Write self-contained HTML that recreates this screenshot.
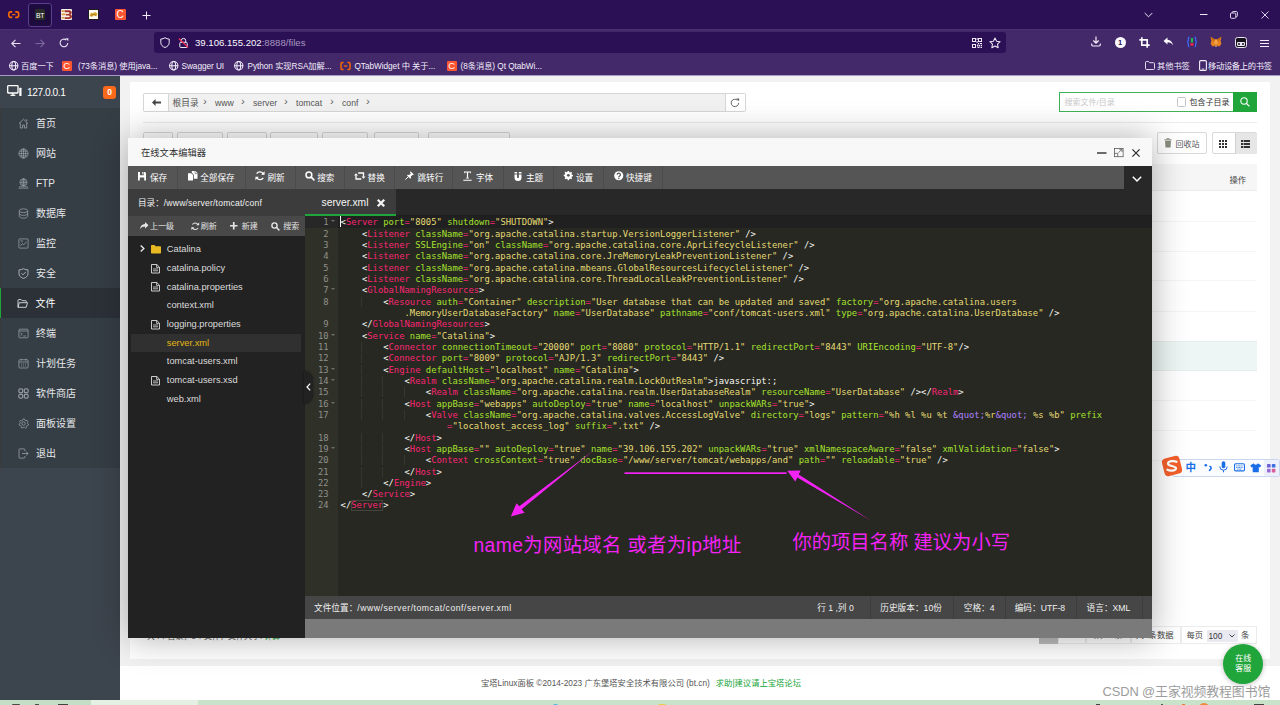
<!DOCTYPE html>
<html lang="zh-CN">
<head>
<meta charset="utf-8">
<title>宝塔Linux面板</title>
<style>
*{box-sizing:border-box;margin:0;padding:0}
html,body{width:1280px;height:705px;overflow:hidden;background:#f2f2f2}
body{position:relative;font-family:"Liberation Sans","Noto Sans CJK SC",sans-serif;font-size:8px;color:#333;-webkit-font-smoothing:antialiased}
.abs{position:absolute}
svg{position:absolute;overflow:visible}
/* ---------- browser chrome ---------- */
#tabbar{left:0;top:0;width:1280px;height:29px;background:#2c1055}
#navbar{left:0;top:29px;width:1280px;height:46px;background:#43296a;border-top:1px solid #4a3170}
#pageline{left:0;top:75px;width:1280px;height:1px;background:#a99bc4}
#urlbar{left:154px;top:32px;width:852px;height:21px;background:#2c1055;border-radius:3px}
.bm{position:absolute;top:59.500px;height:13px;line-height:13px;font-size:8.250px;color:#f3eefa;white-space:nowrap;letter-spacing:-0.05px}
/* ---------- sidebar ---------- */
#side{left:0;top:76px;width:120px;height:623.500px;background:#3c444d}
#sidehead{left:0;top:0;width:120px;height:32px;background:#3c444d}
#menu{left:0;top:32px;width:120px;height:360px;background:#353d45;border-left:1px solid #3a3a38}
.mi{position:absolute;left:-1px;width:120px;height:30px;line-height:31.500px;font-size:10px;color:#e6e8ea;padding-left:36px;white-space:nowrap}
.mi svg{left:17.5px;top:9.5px;width:11px;height:11px}
.mi.on{background:#2c3138;border-left:1.500px solid #20a53a;padding-left:34.500px;color:#fff}
.mi.on svg{left:16px}
/* ---------- main ---------- */
#panel{left:130px;top:82px;width:1140px;height:577px;background:#fff}
#footer{left:120px;top:666px;width:1160px;height:33.500px;background:#fff}
#taskbar{left:0;top:699.500px;width:1280px;height:6px;background:#c9e3cb;overflow:hidden}
.bc{top:13.500px;height:14px;line-height:14px;font-size:8.700px;color:#555;white-space:nowrap}
.bcs{top:12.300px;height:14px;line-height:14px;font-size:11.500px;color:#666;white-space:nowrap}
.tb{top:50px;height:20px;background:#fff;border:1px solid #d9d9d9;border-radius:2px}
.rl{left:13px;width:1114px;height:1px;background:#f5f5f5}
.pg{top:544px;height:18px;line-height:17px;border:1px solid #ececec;background:#fff;font-size:8.300px;color:#444;text-align:center;white-space:nowrap}
/* ---------- modal ---------- */
#modal{left:128px;top:138px;width:1024px;height:499.500px;background:#7a7a7a;overflow:hidden;box-shadow:0 0 33px rgba(0,0,0,.32)}
#mtool{left:0;top:28px;width:1024px;height:23px;background:#555}
.tbd{top:0;margin-left:-0.700px;width:1px;height:23px;background:#4b4b4b}
.tbt{top:4.500px;height:14px;line-height:14px;font-size:8.600px;color:#fff;white-space:nowrap}
.sbt{top:81.500px;height:14px;line-height:14px;font-size:8px;color:#e2e2e2;white-space:nowrap}
#flist{left:0;top:98.200px;width:176.500px;height:410px;background:#222}
.fr{left:3px;width:170px;height:18.667px;line-height:18.667px;font-size:9.300px;color:#dcdcdc;white-space:nowrap}
.fr span{position:absolute;left:35.800px;top:0}
.fr.sel{background:#303030;color:#e3b716}
#ed{left:176.500px;top:78.200px;width:847.500px;height:379.800px;background:#272822;overflow:hidden}
#gutter{left:0;top:0;width:33px;height:100%;background:#2f3129}
.gl{position:relative;height:11.3333px;line-height:11.3333px;font-family:"DejaVu Sans Mono","Liberation Mono",monospace;font-size:8.800px;color:#8f908a;text-align:right;padding-right:9px;padding-top:1.100px}
.gl i{position:absolute;right:2.300px;top:4.300px;width:0;height:0;border-left:2.200px solid transparent;border-right:2.200px solid transparent;border-top:2.800px solid #6d6e68}
.gl.act{background:#272727}
#code{left:33px;top:0;width:814.500px}
.cl{height:11.3333px;line-height:11.3333px;font-family:"DejaVu Sans Mono","Liberation Mono",monospace;font-size:8.850px;color:#f8f8f2;white-space:pre;padding-left:3.100px;padding-top:1.100px}
.cl.act{background:#202020}
.t{color:#f92672}.a{color:#a6e22e}.s{color:#e6db74}.e{color:#f92672}.n{color:#ae81ff}.p{color:#f8f8f2}
#stat{left:176.500px;top:458px;width:847.500px;height:22.700px;background:#464646}
.stt{top:5px;height:14px;line-height:14px;font-size:8.670px;color:#f0f0f0;white-space:nowrap}
.std{top:0;width:1px;height:22.700px;background:#3c3c3c}
.ig{background:linear-gradient(#35362e,#35362e) right top/1px 100% no-repeat}
</style>
</head>
<body>
<!-- ================= BROWSER CHROME ================= -->
<div id="tabbar" class="abs">
  <!-- tab 1 : aliyun -->
  <svg style="left:7.700px;top:11px;width:11.500px;height:7.200px" viewBox="0 0 23 14.400"><path d="M8.500 1.700H5.200A3.500 3.500 0 0 0 1.700 5.200v4a3.500 3.500 0 0 0 3.500 3.500H8.500M14.500 1.700h3.300a3.500 3.500 0 0 1 3.500 3.500v4a3.500 3.500 0 0 1-3.500 3.500H14.500" fill="none" stroke="#ff6a00" stroke-width="3.200"/><rect x="8.300" y="6" width="6.400" height="2.400" fill="#ff6a00"/></svg>
  <!-- tab 2 : active BT -->
  <div class="abs" style="left:28px;top:2.500px;width:24px;height:24px;background:#1f0c3f;border:1px solid #5b3f8e;border-radius:3px"></div>
  <div class="abs" style="left:34.600px;top:9.300px;width:10.800px;height:10.500px;background:#2b2d2b;border-radius:1.500px;color:#fff;font-size:6.800px;line-height:13.400px;overflow:hidden;text-align:center;letter-spacing:-0.300px">BT</div>
  <!-- tab 3 -->
  <div class="abs" style="left:61px;top:9px;width:11.300px;height:11px;background:#f6efe9;border-radius:1px"></div>
  <svg style="left:61px;top:9px;width:11.300px;height:11px" viewBox="0 0 11.300 11"><path d="M0.600 1.300h3v1.600h-3zM0.600 4.600h4v1.600h-4zM0.600 8h3v1.600h-3z" fill="#d89a4a"/><path d="M3.800 1.200h4.200c1.700 0 2.700 1 2.700 2.200 0 1-.5 1.700-1.300 2 1 .3 1.600 1.100 1.600 2.200 0 1.400-1.100 2.300-2.900 2.300H3.800V8.300h3.900c.6 0 1-.4 1-.9s-.4-.9-1-.9H5V4.900h2.600c.6 0 .9-.3.900-.8s-.3-.8-.9-.8H3.800z" fill="#a03428"/></svg>
  <!-- tab 4 : tomcat -->
  <div class="abs" style="left:88px;top:9px;width:11px;height:11px;background:#fbfaf3;border:1px solid #1d1d1d"></div>
  <svg style="left:89.200px;top:10.300px;width:9px;height:8.300px" viewBox="0 0 16 14"><path d="M1 9l3-5 2 2 5-3 4 3-2 5-4-2-4 3z" fill="#d9a92a"/><path d="M3 10l4-3 5 2" stroke="#7a5a14" stroke-width="1" fill="none"/></svg>
  <!-- tab 5 : csdn -->
  <div class="abs" style="left:114.500px;top:9px;width:11px;height:11px;background:#fc5531;border-radius:1px;color:#fff;font-size:10px;line-height:11px;text-align:center">C</div>
  <!-- plus -->
  <svg style="left:142px;top:10.500px;width:9px;height:9px" viewBox="0 0 9 9"><path d="M4.500 0.500v8M0.500 4.500h8" stroke="#f1ecf8" stroke-width="1"/></svg>
  <!-- window controls -->
  <svg style="left:1144px;top:11.500px;width:9px;height:6px" viewBox="0 0 9 6"><path d="M0.700 1l3.800 3.800L8.300 1" fill="none" stroke="#efe9f7" stroke-width="1"/></svg>
  <svg style="left:1199.500px;top:14px;width:8px;height:2px" viewBox="0 0 8 2"><path d="M0 0.500h7.500" stroke="#efe9f7" stroke-width="1"/></svg>
  <svg style="left:1230px;top:10.500px;width:8px;height:8px" viewBox="0 0 8 8"><rect x="0.500" y="2" width="5.300" height="5.300" rx="1" fill="none" stroke="#efe9f7" stroke-width="0.900"/><path d="M2.200 2V1.500a1 1 0 0 1 1-1h3.200a1 1 0 0 1 1 1v3.200a1 1 0 0 1-1 1H5.800" fill="none" stroke="#efe9f7" stroke-width="0.900"/></svg>
  <svg style="left:1260.500px;top:11px;width:8px;height:8px" viewBox="0 0 8 8"><path d="M0.500 0.500l7 7M7.500 0.500l-7 7" stroke="#efe9f7" stroke-width="0.900"/></svg>
</div>
<div id="navbar" class="abs"></div>
<div id="urlbar" class="abs"></div>
<!-- nav buttons -->
<svg style="left:11px;top:38.500px;width:10px;height:9px" viewBox="0 0 10 9"><path d="M9.500 4.500H1M4.500 0.800L0.800 4.500l3.700 3.700" fill="none" stroke="#e8e1f3" stroke-width="1.100"/></svg>
<svg style="left:35px;top:38.500px;width:10px;height:9px" viewBox="0 0 10 9"><path d="M0.500 4.500H9M5.500 0.800L9.200 4.500 5.500 8.200" fill="none" stroke="#7d6a9c" stroke-width="1.100"/></svg>
<svg style="left:59px;top:38px;width:10px;height:10px" viewBox="0 0 10 10"><path d="M8.700 5A3.800 3.800 0 1 1 7.300 2" fill="none" stroke="#e8e1f3" stroke-width="1.100"/><path d="M6.300 0.300h3v3z" fill="#e8e1f3"/></svg>
<!-- url bar content -->
<svg style="left:160px;top:36.700px;width:10px;height:11px" viewBox="0 0 10 11"><path d="M5 0.600C3.800 1.600 2.300 2 0.800 2v3.500C0.800 8 2.600 9.700 5 10.500 7.400 9.700 9.200 8 9.200 5.500V2C7.700 2 6.200 1.600 5 0.600z" fill="none" stroke="#efe9f7" stroke-width="1"/></svg>
<svg style="left:178px;top:37px;width:11px;height:12px" viewBox="0 0 11 12"><rect x="1.800" y="5.300" width="7.400" height="5.200" rx="1" fill="none" stroke="#efe9f7" stroke-width="1"/><path d="M3.300 5.300V3.600a2.200 2.200 0 0 1 4.400 0v1.700" fill="none" stroke="#efe9f7" stroke-width="1"/><path d="M0.800 1.500l9.400 9" stroke="#ff3355" stroke-width="1.100"/></svg>
<div class="abs" style="left:195px;top:36px;height:14px;line-height:14px;font-size:9.600px;color:#fbf9fe;white-space:nowrap;letter-spacing:0">39.106.155.202<span style="color:#a696c0">:8888/files</span></div>
<svg style="left:972px;top:38px;width:10px;height:10px" viewBox="0 0 10 10"><g fill="#efe9f7"><path d="M0 0h4v4H0zM1 1v2h2V1zM6 0h4v4H6zM7 1v2h2V1zM0 6h4v4H0zM1 7v2h2V7z" fill-rule="evenodd"/><rect x="4.600" y="0" width="1" height="2"/><rect x="4.600" y="3" width="1" height="2"/><rect x="6" y="5" width="1.300" height="1.300"/><rect x="8" y="5" width="2" height="1"/><rect x="5" y="6.500" width="1" height="2"/><rect x="6.500" y="7" width="1.500" height="1.500"/><rect x="8.700" y="6.700" width="1.300" height="1.300"/><rect x="5.500" y="9" width="2" height="1"/><rect x="8.500" y="8.700" width="1.500" height="1.300"/></g></svg>
<svg style="left:989.300px;top:36.800px;width:12px;height:12px" viewBox="0 0 11 11"><path d="M5.500 0.900l1.450 3 3.250.4-2.400 2.250.6 3.250-2.900-1.600-2.900 1.600.6-3.250L0.800 4.300l3.250-.4z" fill="none" stroke="#efe9f7" stroke-width="0.950" stroke-linejoin="round"/></svg>
<!-- toolbar right icons -->
<svg style="left:1090.500px;top:36.300px;width:10px;height:11px" viewBox="0 0 10 11"><path d="M5 0.500v6.500M2.300 4.500L5 7.200l2.700-2.700M0.700 7.500v1.300a1.200 1.200 0 0 0 1.200 1.200h6.200a1.200 1.200 0 0 0 1.200-1.200V7.500" fill="none" stroke="#f6f2fb" stroke-width="1.150"/></svg>
<div class="abs" style="left:1114.500px;top:36.800px;width:11px;height:11px;border-radius:50%;background:#fbf9fe;color:#2c1055;font-size:7.500px;font-weight:bold;line-height:11.500px;text-align:center">1</div>
<svg style="left:1139px;top:36.800px;width:11px;height:11px" viewBox="0 0 11 11"><path d="M2.800 0.300v7.900h7.900M0.300 2.800h7.900v7.900" fill="none" stroke="#fbf9fe" stroke-width="1.700"/></svg>
<svg style="left:1163px;top:36.800px;width:11px;height:10px" viewBox="0 0 11 10"><path d="M4.500 0.500L0.500 4l4 3.500V5.300c2.600 0 4.300.9 5.500 3.200C9.600 5 7.700 2.900 4.500 2.700z" fill="#fbf9fe"/></svg>
<svg style="left:1187px;top:36.300px;width:10px;height:12px" viewBox="0 0 10 12"><path d="M2.600 1C1.500 1 1.300 1.600 1.300 2.500v2.200L0.500 6l.8 1.300v2.200c0 .9.200 1.500 1.300 1.500M7.400 1c1.100 0 1.300.6 1.300 1.500v2.200L9.500 6l-.8 1.300v2.200c0 .9-.2 1.500-1.300 1.500" fill="none" stroke="#3d6cff" stroke-width="1.200"/><rect x="3.800" y="2" width="2.400" height="4.500" fill="#26b35a"/><circle cx="5" cy="8.300" r="1.600" fill="#e8284a"/></svg>
<svg style="left:1210px;top:36.300px;width:12px;height:12px" viewBox="0 0 12 12"><path d="M0.600 0.800l4.200 2.600h2.400l4.200-2.600-.8 4.200.8 2.800-2 2.800-2.400-.8H5L2.600 10.600l-2-2.800.8-2.800z" fill="#e8821e"/><path d="M4.800 3.400h2.400l.8 3.500-2 1.500-2-1.500z" fill="#f5a04a"/><path d="M5 9.800h2l-.3 1h-1.400z" fill="#d9c7b8"/><path d="M0.600 0.800l4.200 2.600-1 3zM11.400 0.800L7.200 3.400l1 3z" fill="#c96a14"/></svg>
<div class="abs" style="left:1234.500px;top:36.800px;width:12px;height:11px;background:#17131d;border:1px solid #e9e4f1;border-radius:2.500px"></div>
<div class="abs" style="left:1236.500px;top:42.300px;width:8px;height:3.500px;background:#e9e4f1;border-radius:1px"></div>
<div class="abs" style="left:1237.500px;top:43.100px;width:2px;height:2px;background:#17131d;border-radius:50%"></div>
<div class="abs" style="left:1241.500px;top:43.100px;width:2px;height:2px;background:#17131d;border-radius:50%"></div>
<svg style="left:1259.500px;top:39.500px;width:9px;height:7px" viewBox="0 0 9 7"><path d="M0 0.500h9M0 3.500h9M0 6.500h9" stroke="#f3eefa" stroke-width="1"/></svg>
<!-- bookmarks -->
<svg class="globe" style="left:8.500px;top:61px;width:9.500px;height:9.500px" viewBox="0 0 10 10"><g fill="none" stroke="#f3eefa" stroke-width="1.100"><circle cx="5" cy="5" r="4.400"/><ellipse cx="5" cy="5" rx="2" ry="4.400"/><path d="M0.600 5h8.800"/></g></svg>
<div class="bm" style="left:21px">百度一下</div>
<div class="abs" style="left:61.500px;top:60.500px;width:10.500px;height:10.500px;background:#fc5531;border-radius:1px;color:#fff;font-size:9.500px;line-height:10.500px;text-align:center">C</div>
<div class="bm" style="left:78px">(73条消息) 使用java...</div>
<svg class="globe" style="left:168.500px;top:61px;width:9.500px;height:9.500px" viewBox="0 0 10 10"><g fill="none" stroke="#f3eefa" stroke-width="1.100"><circle cx="5" cy="5" r="4.400"/><ellipse cx="5" cy="5" rx="2" ry="4.400"/><path d="M0.600 5h8.800"/></g></svg>
<div class="bm" style="left:181.500px">Swagger UI</div>
<svg class="globe" style="left:234px;top:61px;width:9.500px;height:9.500px" viewBox="0 0 10 10"><g fill="none" stroke="#f3eefa" stroke-width="1.100"><circle cx="5" cy="5" r="4.400"/><ellipse cx="5" cy="5" rx="2" ry="4.400"/><path d="M0.600 5h8.800"/></g></svg>
<div class="bm" style="left:247.500px">Python 实现RSA加解...</div>
<svg style="left:340px;top:61px;width:11px;height:10px" viewBox="0 0 22 20"><path d="M7 3H4.500A2.500 2.500 0 0 0 2 5.500v9A2.500 2.500 0 0 0 4.500 17H7M15 3h2.500A2.500 2.500 0 0 1 20 5.500v9a2.500 2.500 0 0 1-2.500 2.500H15" fill="none" stroke="#ff6a00" stroke-width="2.800"/><rect x="7.500" y="8.800" width="7" height="2.400" fill="#ff6a00"/></svg>
<div class="bm" style="left:354.500px">QTabWidget 中 关于...</div>
<div class="abs" style="left:446.500px;top:60.500px;width:10.500px;height:10.500px;background:#fc5531;border-radius:1px;color:#fff;font-size:9.500px;line-height:10.500px;text-align:center">C</div>
<div class="bm" style="left:460.500px">(8条消息) Qt QtabWi...</div>
<svg style="left:1144.500px;top:61px;width:10px;height:9px" viewBox="0 0 10 9"><path d="M0.500 1.500a1 1 0 0 1 1-1h2l1 1.200h4a1 1 0 0 1 1 1v4.800a1 1 0 0 1-1 1h-7a1 1 0 0 1-1-1z" fill="none" stroke="#f3eefa" stroke-width="0.900"/></svg>
<div class="bm" style="left:1157px">其他书签</div>
<svg style="left:1198.500px;top:60px;width:8px;height:11px" viewBox="0 0 8 11"><rect x="0.600" y="0.600" width="6.800" height="9.800" rx="1.200" fill="none" stroke="#f3eefa" stroke-width="1.100"/><path d="M2.800 9h2.400" stroke="#f3eefa" stroke-width="0.900"/></svg>
<div class="bm" style="left:1208px;letter-spacing:-0.300px">移动设备上的书签</div>
<div id="pageline" class="abs"></div>

<!-- ================= SIDEBAR ================= -->
<div id="side" class="abs">
  <div id="sidehead" class="abs">
    <svg style="left:6.500px;top:9px;width:15px;height:12px" viewBox="0 0 15 12"><rect x="0.700" y="0.700" width="10.300" height="7.300" rx="0.500" fill="none" stroke="#fff" stroke-width="1.300"/><path d="M3.500 10.300h4.800" stroke="#fff" stroke-width="1.300"/><path d="M5.900 8v2" stroke="#fff" stroke-width="1.300"/><rect x="12.300" y="2.800" width="2.200" height="8.200" rx="0.500" fill="#fff"/></svg>
    <div class="abs" style="left:27px;top:9px;height:15px;line-height:15px;font-size:10.200px;letter-spacing:-0.450px;color:#fff;white-space:nowrap">127.0.0.1</div>
    <div class="abs" style="left:103px;top:9.500px;width:13px;height:13.500px;background:#fb6a1a;border-radius:3px;color:#fff;font-size:8.500px;font-weight:bold;line-height:13.500px;text-align:center">0</div>
  </div>
  <div id="menu" class="abs">
    <div class="mi" style="top:0px"><svg viewBox="0 0 11 11"><path d="M1 5.600L5.500 1.200 10 5.600M2.300 4.800V10h2.300V7h1.800v3h2.300V4.800M7.800 1.800h1v1.500" fill="none" stroke="#9aa2a9" stroke-width="0.800"/></svg>首页</div>
    <div class="mi" style="top:30px"><svg viewBox="0 0 11 11"><g fill="none" stroke="#9aa2a9" stroke-width="0.700"><circle cx="5.500" cy="5.500" r="4.600"/><ellipse cx="5.500" cy="5.500" rx="2.200" ry="4.600"/><path d="M0.900 5.500h9.200M1.600 3.200h7.800M1.600 7.800h7.800M5.500 0.900v9.200"/></g></svg>网站</div>
    <div class="mi" style="top:60px"><svg viewBox="0 0 11 11"><g fill="none" stroke="#9aa2a9" stroke-width="0.700"><circle cx="5.500" cy="4.300" r="3.600"/><ellipse cx="5.500" cy="4.300" rx="1.700" ry="3.600"/><path d="M1.900 4.300h7.200M5.500 0.700v7.200M1 8.800h9M0.500 10.200h10"/></g></svg>FTP</div>
    <div class="mi" style="top:90px"><svg viewBox="0 0 11 11"><g fill="none" stroke="#9aa2a9" stroke-width="0.750"><ellipse cx="5.500" cy="2.700" rx="4.200" ry="1.900"/><path d="M1.300 2.700v5.600c0 1 1.900 1.900 4.200 1.900s4.200-.9 4.200-1.900V2.700M1.300 5.500c0 1 1.900 1.900 4.200 1.900s4.200-.9 4.200-1.900"/></g></svg>数据库</div>
    <div class="mi" style="top:120px"><svg viewBox="0 0 11 11"><g fill="none" stroke="#9aa2a9" stroke-width="0.750"><rect x="0.900" y="0.900" width="9.200" height="9.200" rx="0.800"/><path d="M2.500 7.800l1.800-2.200 1.500 1.200 2.600-3M2.500 3h2.500"/></g></svg>监控</div>
    <div class="mi" style="top:150px"><svg viewBox="0 0 11 11"><g fill="none" stroke="#c5cbd0" stroke-width="0.800"><path d="M5.500 0.700C4.200 1.500 2.700 1.900 1 1.900v3.700c0 2.400 1.900 4 4.500 4.800C8.100 9.600 10 8 10 5.600V1.900C8.300 1.900 6.800 1.500 5.500 0.700z"/><path d="M3.500 5.300l1.500 1.500 2.700-2.800"/></g></svg>安全</div>
    <div class="mi on" style="top:180px"><svg viewBox="0 0 11 11"><g fill="none" stroke="#e6e8ea" stroke-width="0.850"><path d="M1 9.300V2.200a.6.600 0 0 1 .6-.6h2.600l1 1.100h3.500a.6.600 0 0 1 .6.600v1"/><path d="M1 9.300l1.300-4.600h8.200L9.200 9.300z"/></g></svg>文件</div>
    <div class="mi" style="top:210px"><svg viewBox="0 0 11 11"><g fill="none" stroke="#9aa2a9" stroke-width="0.750"><rect x="0.900" y="1.200" width="9.200" height="8.600" rx="0.800"/><path d="M0.900 3h9.200M2.600 4.700l1.700 1.500-1.700 1.500M5.300 8h2.600"/></g></svg>终端</div>
    <div class="mi" style="top:240px"><svg viewBox="0 0 11 11"><g fill="none" stroke="#9aa2a9" stroke-width="0.750"><rect x="0.900" y="1.700" width="9.200" height="8.300" rx="1"/><path d="M0.900 4h9.200M3.200 0.700v2M7.800 0.700v2M3 6h1M5 6h1M7 6h1M3 8h1M5 8h1M7 8h1"/></g></svg>计划任务</div>
    <div class="mi" style="top:270px"><svg viewBox="0 0 11 11"><g fill="none" stroke="#c5cbd0" stroke-width="0.800"><rect x="0.900" y="0.900" width="3.800" height="3.800" rx="0.700"/><rect x="6.300" y="0.900" width="3.800" height="3.800" rx="0.700"/><rect x="0.900" y="6.300" width="3.800" height="3.800" rx="0.700"/><rect x="6.300" y="6.300" width="3.800" height="3.800" rx="0.700"/></g></svg>软件商店</div>
    <div class="mi" style="top:300px"><svg viewBox="0 0 11 11"><g fill="none" stroke="#9aa2a9" stroke-width="0.750"><circle cx="5.500" cy="5.500" r="1.700"/><path d="M5.500 0.800l1 .2.400 1.200 1.100.6 1.200-.4.700.9-.6 1.100.2 1.100 1 .7-.3 1.100-1.200.2-.7.900.2 1.200-1 .5-.9-.8H5l-.9.800-1-.5.200-1.200-.7-.9-1.200-.2-.3-1.100 1-.7.200-1.100-.6-1.100.7-.9 1.200.4 1.100-.6.400-1.200z"/></g></svg>面板设置</div>
    <div class="mi" style="top:330px"><svg viewBox="0 0 11 11"><g fill="none" stroke="#9aa2a9" stroke-width="0.800"><path d="M6.800 3V1.500a.6.600 0 0 0-.6-.6H1.600a.6.600 0 0 0-.6.600v8a.6.600 0 0 0 .6.600h4.600a.6.600 0 0 0 .6-.6V8"/><path d="M4 5.500h6M8.200 3.600l1.900 1.900-1.900 1.900"/></g></svg>退出</div>
  </div>
</div>

<!-- ================= MAIN ================= -->
<div id="panel" class="abs">
  <!-- breadcrumb -->
  <div class="abs" style="left:13px;top:10.500px;width:602.500px;height:19.500px;background:#f1f1f1;border:1px solid #d6d6d6;border-radius:1.500px"></div>
  <div class="abs" style="left:14px;top:11.500px;width:24.500px;height:17.500px;background:#fff;border-right:1px solid #d6d6d6"></div>
  <svg style="left:21.500px;top:16.500px;width:9px;height:7px" viewBox="0 0 9 7"><path d="M3.600 0L0 3.500 3.600 7V4.500H9v-2H3.600z" fill="#444"/></svg>
  <div class="abs bc" style="left:42.500px">根目录</div><div class="abs bcs" style="left:73px">›</div>
  <div class="abs bc" style="left:85px">www</div><div class="abs bcs" style="left:111px">›</div>
  <div class="abs bc" style="left:123px">server</div><div class="abs bcs" style="left:154px">›</div>
  <div class="abs bc" style="left:166px">tomcat</div><div class="abs bcs" style="left:200px">›</div>
  <div class="abs bc" style="left:212px">conf</div><div class="abs bcs" style="left:236px">›</div>
  <div class="abs" style="left:594.500px;top:11.500px;width:20px;height:17.500px;background:#fff;border-left:1px solid #d6d6d6"></div>
  <svg style="left:600px;top:15.500px;width:10px;height:10px" viewBox="0 0 10 10"><path d="M8.600 5A3.700 3.700 0 1 1 7.400 2.200" fill="none" stroke="#555" stroke-width="0.900"/><path d="M6.300 0.500h2.800v2.800z" fill="#555"/></svg>
  <!-- search -->
  <div class="abs" style="left:928.500px;top:10px;width:198.500px;height:20px;background:#fff;border:1px solid #3fb257"></div>
  <div class="abs" style="left:1103px;top:10px;width:24px;height:20px;background:#20a53a"></div>
  <svg style="left:1110px;top:15px;width:10px;height:10px" viewBox="0 0 10 10"><circle cx="4" cy="4" r="3.200" fill="none" stroke="#fff" stroke-width="1.100"/><path d="M6.400 6.400l3 3" stroke="#fff" stroke-width="1.300"/></svg>
  <div class="abs" style="left:934.500px;top:14.200px;height:14px;line-height:14px;font-size:8px;color:#c9c9c9;white-space:nowrap">搜索文件/目录</div>
  <div class="abs" style="left:1046.500px;top:15px;width:9px;height:9.500px;background:#fff;border:1px solid #c4c4c4;border-radius:1.500px"></div>
  <div class="abs" style="left:1059.500px;top:14.200px;height:14px;line-height:14px;font-size:8px;color:#333;white-space:nowrap">包含子目录</div>
  <!-- separator -->
  <div class="abs" style="left:13px;top:39.800px;width:1114px;height:1px;background:#ececec"></div>
  <!-- toolbar buttons (mostly hidden by modal) -->
  <div class="abs tb" style="left:13px;width:30px"></div>
  <div class="abs tb" style="left:47px;width:46px"></div>
  <div class="abs tb" style="left:97px;width:40px"></div>
  <div class="abs tb" style="left:140px;width:48px"></div>
  <div class="abs tb" style="left:192px;width:46px"></div>
  <div class="abs tb" style="left:244px;width:45px"></div>
  <div class="abs tb" style="left:298px;width:82px"></div>
  <div class="abs tb" style="left:1026.500px;width:50px;height:22px"></div>
  <svg style="left:1034px;top:55.500px;width:8px;height:10px" viewBox="0 0 8 10"><path d="M0.300 1.800h7.400M2.800 1.800V0.600h2.400v1.200" fill="none" stroke="#878c7e" stroke-width="0.900"/><path d="M1 2.800h6l-.5 6.700h-5z" fill="#878c7e"/></svg>
  <div class="abs" style="left:1045.500px;top:55.500px;height:14px;line-height:14px;font-size:8px;color:#555;white-space:nowrap">回收站</div>
  <div class="abs tb" style="left:1082px;width:45px;height:22px"></div>
  <div class="abs" style="left:1104.500px;top:51px;width:22px;height:21px;background:#e6e6e6;border-left:1px solid #d0d0d0;border-radius:0 2px 2px 0"></div>
  <svg style="left:1089px;top:58px;width:8px;height:8px" viewBox="0 0 8 8"><g fill="#333"><rect x="0" y="0" width="2" height="2"/><rect x="3" y="0" width="2" height="2"/><rect x="6" y="0" width="2" height="2"/><rect x="0" y="3" width="2" height="2"/><rect x="3" y="3" width="2" height="2"/><rect x="6" y="3" width="2" height="2"/><rect x="0" y="6" width="2" height="2"/><rect x="3" y="6" width="2" height="2"/><rect x="6" y="6" width="2" height="2"/></g></svg>
  <svg style="left:1111px;top:58px;width:9px;height:8px" viewBox="0 0 9 8"><g fill="#333"><rect x="0" y="0" width="2" height="2"/><rect x="2.600" y="0" width="6.400" height="2"/><rect x="0" y="3" width="2" height="2"/><rect x="2.600" y="3" width="6.400" height="2"/><rect x="0" y="6" width="2" height="2"/><rect x="2.600" y="6" width="6.400" height="2"/></g></svg>
  <!-- table -->
  <div class="abs" style="left:13px;top:82px;width:1114px;height:26.800px;background:#f6f6f6;border-bottom:1px solid #ececec"></div>
  <div class="abs" style="left:1099.500px;top:91px;height:14px;line-height:14px;font-size:8.300px;color:#444;white-space:nowrap">操作</div>
  <div class="abs rl" style="top:138.8px"></div>
  <div class="abs rl" style="top:168.5px"></div>
  <div class="abs rl" style="top:198.3px"></div>
  <div class="abs rl" style="top:228.5px"></div>
  <div class="abs rl" style="top:258.5px"></div>
  <div class="abs rl" style="top:288.4px"></div>
  <div class="abs rl" style="top:318.2px"></div>
  <div class="abs rl" style="top:348.4px"></div>
  <div class="abs rl" style="top:378.4px"></div>
  <div class="abs" style="left:13px;top:259px;width:1114px;height:29.500px;background:#edf6f4;border-top:1px solid #e3efec;border-bottom:1px solid #e3efec"></div>
  <!-- bottom info + pagination -->
  <div class="abs" style="left:17px;top:548px;height:14px;line-height:14px;font-size:8px;color:#555;white-space:nowrap">共4个目录，5个文件，文件大小: <span style="color:#20a53a">计算</span></div>
  <div class="abs pg" style="left:909px;width:18.500px;background:#bdbdbd;border-color:#bdbdbd;color:#fff">1</div>
  <div class="abs pg" style="left:927.500px;width:28px">1/1</div>
  <div class="abs pg" style="left:955.500px;width:45.500px">从1-9条</div>
  <div class="abs pg" style="left:1001px;width:50px;text-align:right;padding-right:6.500px">共9条数据</div>
  <div class="abs pg" style="left:1050.500px;width:76px"></div>
  <div class="abs" style="left:1056.500px;top:545px;height:16px;line-height:16px;font-size:8.300px;color:#444;white-space:nowrap">每页</div>
  <div class="abs" style="left:1077px;top:547.500px;width:31px;height:12px;background:#e9e9f2;border-radius:1px;font-size:8.300px;line-height:12px;color:#333;padding-left:1.500px">100</div>
  <svg style="left:1099px;top:551.500px;width:6px;height:4px" viewBox="0 0 6 4"><path d="M0.500 0.500L3 3l2.500-2.500" fill="none" stroke="#333" stroke-width="0.900"/></svg>
  <div class="abs" style="left:1111px;top:545px;height:16px;line-height:16px;font-size:8.300px;color:#444;white-space:nowrap">条</div>
</div>
<div id="footer" class="abs">
  <div class="abs" style="left:361px;top:10px;height:14px;line-height:14px;font-size:8.300px;color:#555;white-space:nowrap">宝塔Linux面板 ©2014-2023 广东堡塔安全技术有限公司 (bt.cn)<span style="color:#20a53a;margin-left:6px">求助|建议请上宝塔论坛</span></div>
</div>
<div id="taskbar" class="abs">
  <div class="abs" style="left:0;top:0;width:91px;height:6px;background:#c5dfc7"></div>
  <div class="abs" style="left:91px;top:0;width:107px;height:6px;background:#e3f0e3"></div>
  <div class="abs" style="left:12px;top:4.500px;width:8px;height:2px;background:#4a4f4a;border-radius:1px 1px 0 0"></div>
  <div class="abs" style="left:35px;top:4.800px;width:4px;height:2px;background:#4a4f4a"></div>
  <div class="abs" style="left:58px;top:4.500px;width:10px;height:2px;background:#3f443f"></div>
  <div class="abs" style="left:101px;top:5px;width:3px;height:1px;background:#e8d46a"></div>
  <div class="abs" style="left:553px;top:4.800px;width:5px;height:2px;background:#4ab8e0;border-radius:2px 2px 0 0"></div>
  <div class="abs" style="left:658px;top:4.800px;width:8px;height:2px;background:#e6cf4a;border-radius:2px 2px 0 0"></div>
  <div class="abs" style="left:768px;top:5px;width:4px;height:1px;background:#4ab8e0"></div>
  <div class="abs" style="left:1096px;top:4.500px;width:4px;height:2px;background:#444"></div>
  <div class="abs" style="left:1161px;top:4.800px;width:2px;height:2px;background:#555"></div>
  <div class="abs" style="left:1182px;top:4.500px;width:3px;height:2px;background:#e87a2a"></div>
  <div class="abs" style="left:1198px;top:3.500px;width:12px;height:6px;background:#f08a3a;border-radius:6px 6px 0 0"></div>
  <div class="abs" style="left:1254px;top:4.500px;width:10px;height:2px;background:#444"></div>
</div>
<div class="abs" style="left:1223.300px;top:643.600px;width:40px;height:40px;border-radius:50%;background:#20a53a;box-shadow:0 1px 5px rgba(0,0,0,.25);color:#fff;font-size:8px;line-height:10px;text-align:center;padding-top:10.200px;z-index:30">在线<br>客服</div>
<div class="abs" style="left:1102.500px;top:682.500px;height:18px;line-height:18px;font-size:12.900px;color:#9c9c9c;white-space:nowrap;text-shadow:0 0 1px #fff,0 0 1px #fff,0.500px 0.500px 0 #fff,-0.500px -0.500px 0 #fff;z-index:31;letter-spacing:-0.100px">CSDN @王家视频教程图书馆</div>
<!-- sogou IME bar -->
<div class="abs" style="left:1172px;top:458.700px;width:108px;height:18px;background:#fafcff;border:1px solid #c9d8ee;border-radius:2px"></div>
<svg style="left:1160.700px;top:455px;width:22px;height:22px" viewBox="0 0 22 22"><rect x="2" y="2" width="18" height="18" rx="4" fill="#f4602b" transform="rotate(-14 11 11)"/><path d="M15.500 6.800C13 5.600 7 5.800 7 8.700c0 2.700 8 1.800 8 4.600 0 2.800-6 2.800-8.600 1.400" fill="none" stroke="#fff" stroke-width="2.200" stroke-linecap="round"/></svg>
<div class="abs" style="left:1185.500px;top:459.800px;height:14px;line-height:14px;font-size:10.500px;font-weight:bold;color:#1a6fe8">中</div>
<svg style="left:1204px;top:462.800px;width:9px;height:9px" viewBox="0 0 9 9"><circle cx="1.800" cy="2.200" r="1.300" fill="#1a6fe8"/><path d="M6 3.500c1.400 0 1.600 2.300-.5 3.800" fill="none" stroke="#1a6fe8" stroke-width="1.600" stroke-linecap="round"/></svg>
<svg style="left:1218.500px;top:461.200px;width:9px;height:12px" viewBox="0 0 9 12"><rect x="2.700" y="0.300" width="3.600" height="7" rx="1.800" fill="#1a6fe8"/><path d="M0.800 5.500a3.700 3.700 0 0 0 7.400 0M4.500 9.300v2" fill="none" stroke="#1a6fe8" stroke-width="1"/></svg>
<svg style="left:1234px;top:463px;width:11px;height:8.500px" viewBox="0 0 12 9"><rect x="0.600" y="0.600" width="10.800" height="7.800" rx="1.200" fill="none" stroke="#1a6fe8" stroke-width="1.200"/><path d="M2.500 3h7M2.500 4.800h7M3.500 6.500h5" stroke="#1a6fe8" stroke-width="1" stroke-dasharray="1 0.600"/></svg>
<svg style="left:1250px;top:462.500px;width:11.500px;height:9.600px" viewBox="0 0 12 10"><path d="M3.800 0.300L0.300 2.500l1.300 2.300 1.200-.6v5.500h6.400V4.200l1.200.6 1.300-2.300L8.200 0.300C7.800 1.300 7 1.800 6 1.800S4.200 1.300 3.800 0.300z" fill="#1a6fe8"/></svg>
<div class="abs" style="left:1263.500px;top:459.700px;width:15.500px;height:16px;background:#edf0fb"></div>
<svg style="left:1267.300px;top:463.800px;width:8.600px;height:8.600px" viewBox="0 0 10 10"><rect x="0" y="0" width="4.200" height="4.200" rx="0.800" fill="#6a5fd6"/><rect x="5.600" y="0" width="4.200" height="4.200" rx="0.800" fill="#3d6fe0"/><rect x="0" y="5.600" width="4.200" height="4.200" rx="0.800" fill="#9a6ad6"/><rect x="5.600" y="5.600" width="4.200" height="4.200" rx="0.800" fill="#d65f9a"/></svg>

<!-- ================= MODAL ================= -->
<div id="modal" class="abs">
  <!-- title -->
  <div class="abs" style="left:0;top:0;width:1024px;height:28px;background:#f8f8f8"></div>
  <div class="abs" style="left:13px;top:7.500px;height:14px;line-height:14px;font-size:9.300px;color:#333;white-space:nowrap">在线文本编辑器</div>
  <svg style="left:968.700px;top:14px;width:9.500px;height:2px" viewBox="0 0 9.500 2"><path d="M0 1h9.500" stroke="#2e2e2e" stroke-width="1.400"/></svg>
  <svg style="left:986px;top:9.800px;width:9.500px;height:9.200px" viewBox="0 0 10 9.500"><rect x="0.400" y="0.400" width="9.200" height="8.700" fill="none" stroke="#4a4a4a" stroke-width="0.750"/><path d="M0.400 5.600h3.500v3.500M4.500 5L8.300 1.300M5.500 1.200h2.900v2.900" fill="none" stroke="#4a4a4a" stroke-width="0.750"/></svg>
  <svg style="left:1003.500px;top:11px;width:8px;height:8px" viewBox="0 0 8 8"><path d="M0.400 0.400l7.200 7.200M7.600 0.400L0.400 7.600" stroke="#2a2a2a" stroke-width="1.200"/></svg>
  <!-- toolbar -->
  <div id="mtool" class="abs">
    <div class="abs tbd" style="left:49.7px"></div>
    <svg style="left:9.8px;top:5.5px;width:8px;height:8.500px" viewBox="0 0 8 8.500"><path d="M0 0h2v3.200h3.800V0H7l1 1v7.500H6.200V5.600H1.800v2.900H0z" fill="#fff"/><rect x="4.300" y="0" width="1" height="2.300" fill="#fff"/></svg>
    <div class="abs tbt" style="left:21.9px">保存</div>
    <div class="abs tbd" style="left:117.5px"></div>
    <svg style="left:59.5px;top:5px;width:9.500px;height:9.500px" viewBox="0 0 9.500 9.500"><path d="M0 2.300h3.200L5 4.100v5.400H0z" fill="#fff"/><path d="M3.800 0h3.600l2.100 2.100v5.600H5.800V3.700L3.800 1.700z" fill="#fff"/><path d="M7 0.300v2.200h2.200" fill="none" stroke="#555" stroke-width="0.600"/></svg>
    <div class="abs tbt" style="left:72.2px">全部保存</div>
    <div class="abs tbd" style="left:167.4px"></div>
    <svg style="left:127.0px;top:5px;width:10px;height:9.500px" viewBox="0 0 10 9.500"><path d="M8.300 3.300A3.700 3.700 0 0 0 1.700 2.600M1.700 6.200a3.700 3.700 0 0 0 6.600 .7" fill="none" stroke="#fff" stroke-width="1.300"/><path d="M9.600 0.300v3.400H6.200zM0.400 9.200V5.800h3.400z" fill="#fff"/></svg>
    <div class="abs tbt" style="left:139.4px">刷新</div>
    <div class="abs tbd" style="left:216.6px"></div>
    <svg style="left:176.8px;top:5px;width:9.500px;height:9.500px" viewBox="0 0 9.500 9.500"><circle cx="3.900" cy="3.900" r="2.900" fill="none" stroke="#fff" stroke-width="1.500"/><path d="M6.200 6.200l2.700 2.700" stroke="#fff" stroke-width="1.700" stroke-linecap="round"/></svg>
    <div class="abs tbt" style="left:189.2px">搜索</div>
    <div class="abs tbd" style="left:266.5px"></div>
    <svg style="left:225.8px;top:5.5px;width:11.500px;height:8px" viewBox="0 0 11.500 8"><path d="M2 3.200V7h5.300M9.500 4.800V1H4.200" fill="none" stroke="#fff" stroke-width="1.300"/><path d="M0 3.600h4L2 1.200zM7.500 4.400h4l-2 2.400z" fill="#fff"/></svg>
    <div class="abs tbt" style="left:239.6px">替换</div>
    <div class="abs tbd" style="left:325.0px"></div>
    <svg style="left:277.300px;top:4.800px;width:9px;height:9px" viewBox="0 0 9 9"><path d="M5.600 0.200l3.200 3.200-.6.600-.7-.1-1.700 1.700.2 1.500-.7.700L2 4.500l.7-.7 1.500.2 1.700-1.700L5 1.600z" fill="#fff"/><path d="M3.500 5.500L0.400 8.600" stroke="#fff" stroke-width="1"/></svg>
    <div class="abs tbt" style="left:289.5px">跳转行</div>
    <div class="abs tbd" style="left:376.000px"></div>
    <svg style="left:335.0px;top:5px;width:9px;height:10px" viewBox="0 0 9 10"><path d="M1 0.500h7v1.800H7.300V1.500H5.100v5.300h1v.7H2.900v-.7h1V1.500H1.700v.8H1zM0.300 8.700h8.400v1H0.300z" fill="#fff"/></svg>
    <div class="abs tbt" style="left:348.0px">字体</div>
    <div class="abs tbd" style="left:426.0px"></div>
    <svg style="left:386.000px;top:5.500px;width:8px;height:9px" viewBox="0 0 8 9"><path d="M0.500 0h2.600v1.600H0.500zM4.900 0h2.600v1.600H4.900zM0.500 2.400h2.600v2.800a.9.900 0 0 0 1.800 0V2.400h2.600v3a3.500 3.500 0 0 1-7 0z" fill="#fff"/></svg>
    <div class="abs tbt" style="left:398.0px">主题</div>
    <div class="abs tbd" style="left:476.0px"></div>
    <svg style="left:436.000px;top:5.300px;width:8.700px;height:8.700px" viewBox="0 0 10 10"><path d="M4.200 0h1.600l.3 1.300 1 .4 1.100-.7 1.100 1.100-.7 1.100.4 1 1.300.3v1.600l-1.300.3-.4 1 .7 1.100-1.100 1.100-1.100-.7-1 .4-.3 1.300H4.200l-.3-1.300-1-.4-1.100.7-1.100-1.100.7-1.100-.4-1L-.3 5.800V4.200l1.300-.3.4-1-.7-1.100L1.800.7l1.100.7 1-.4z" fill="#fff"/><circle cx="5" cy="5" r="1.600" fill="#555"/></svg>
    <div class="abs tbt" style="left:448.0px">设置</div>
    <div class="abs tbd" style="left:535.000px"></div>
    <svg style="left:485.5px;top:5px;width:9.500px;height:9.500px" viewBox="0 0 10 10"><circle cx="5" cy="5" r="4.800" fill="#fff"/><path d="M3.300 3.900a1.700 1.700 0 1 1 2.500 1.500c-.5.300-.7.500-.7 1.100" fill="none" stroke="#555" stroke-width="1.300"/><circle cx="5.050" cy="7.900" r="0.750" fill="#555"/></svg>
    <div class="abs tbt" style="left:498.0px">快捷键</div>
    <div class="abs" style="left:995.500px;top:0;width:28.500px;height:23px;background:#282828"></div>
    <svg style="left:1004px;top:9.800px;width:10px;height:6px" viewBox="0 0 10 6"><path d="M0.800 0.800L5 5l4.200-4.200" fill="none" stroke="#fff" stroke-width="1.500"/></svg>
  </div>
  <!-- left panel -->
  <div class="abs" style="left:0;top:51px;width:176.500px;height:27px;background:#3c3c3c"></div>
  <div class="abs" style="left:10px;top:58px;height:14px;line-height:14px;font-size:8.600px;color:#f0f0f0;white-space:nowrap">目录：<span style="letter-spacing:0.180px">/www/server/tomcat/conf</span></div>
  <div class="abs" style="left:0;top:77.700px;width:176.500px;height:20.500px;background:#484848"></div>
  <svg style="left:12px;top:84px;width:8.500px;height:7.500px" viewBox="0 0 8.500 7.500"><path d="M5 0l3.500 3.300L5 6.600V4.500C2.800 4.500 1.300 5.200 0 7.300 0.300 4.300 2 2.300 5 2.100z" fill="#e6e6e6"/></svg>
  <div class="abs sbt" style="left:22px">上一级</div>
  <svg style="left:63px;top:83.500px;width:8.500px;height:8.500px" viewBox="0 0 10 9.500"><path d="M8.300 3.300A3.700 3.700 0 0 0 1.700 2.600M1.700 6.200a3.700 3.700 0 0 0 6.600 .7" fill="none" stroke="#e6e6e6" stroke-width="1.300"/><path d="M9.600 0.300v3.400H6.200zM0.400 9.200V5.800h3.400z" fill="#e6e6e6"/></svg>
  <div class="abs sbt" style="left:72.800px">刷新</div>
  <svg style="left:102px;top:84px;width:7.500px;height:7.500px" viewBox="0 0 7.500 7.500"><path d="M3.750 0v7.500M0 3.750h7.500" stroke="#e6e6e6" stroke-width="1.700"/></svg>
  <div class="abs sbt" style="left:113.800px">新建</div>
  <svg style="left:142.800px;top:83.500px;width:8.500px;height:8.500px" viewBox="0 0 9.500 9.500"><circle cx="3.900" cy="3.900" r="2.900" fill="none" stroke="#e6e6e6" stroke-width="1.500"/><path d="M6.200 6.200l2.700 2.700" stroke="#e6e6e6" stroke-width="1.700" stroke-linecap="round"/></svg>
  <div class="abs sbt" style="left:155.300px">搜索</div>
  <div id="flist" class="abs">
    <div class="abs fr" style="top:4.20px"><svg style="left:9px;top:4.600px;width:5px;height:7px" viewBox="0 0 5 7"><path d="M0.700 0.500L3.900 3.500 0.700 6.500" fill="none" stroke="#f0f0f0" stroke-width="1.250"/></svg><svg style="left:20px;top:5px;width:10px;height:8.500px" viewBox="0 0 10 8.500"><path d="M0 0.800a.8.800 0 0 1 .8-.8h2.700l1 1.300h4.700a.8.800 0 0 1 .8.800v5.600a.8.800 0 0 1-.8.800H.8a.8.800 0 0 1-.8-.8z" fill="#e8b923"/></svg><span>Catalina</span></div>
    <div class="abs fr" style="top:22.87px"><svg style="left:20px;top:4.500px;width:9px;height:9.500px" viewBox="0 0 9 9.500"><path d="M0.500 0.500h5.300L8.500 3.200v5.800H0.500z" fill="none" stroke="#e0e0e0" stroke-width="0.900"/><path d="M5.600 0.500v2.900h2.900M2 5h5M2 6.800h5" fill="none" stroke="#e0e0e0" stroke-width="0.800"/></svg><span>catalina.policy</span></div>
    <div class="abs fr" style="top:41.53px"><svg style="left:20px;top:4.500px;width:9px;height:9.500px" viewBox="0 0 9 9.500"><path d="M0.500 0.500h5.300L8.500 3.200v5.800H0.500z" fill="none" stroke="#e0e0e0" stroke-width="0.900"/><path d="M5.600 0.500v2.900h2.900M2 5h5M2 6.800h5" fill="none" stroke="#e0e0e0" stroke-width="0.800"/></svg><span>catalina.properties</span></div>
    <div class="abs fr" style="top:60.20px"><span>context.xml</span></div>
    <div class="abs fr" style="top:78.87px"><svg style="left:20px;top:4.500px;width:9px;height:9.500px" viewBox="0 0 9 9.500"><path d="M0.500 0.500h5.300L8.500 3.200v5.800H0.500z" fill="none" stroke="#e0e0e0" stroke-width="0.900"/><path d="M5.600 0.500v2.900h2.900M2 5h5M2 6.800h5" fill="none" stroke="#e0e0e0" stroke-width="0.800"/></svg><span>logging.properties</span></div>
    <div class="abs fr sel" style="top:97.54px"><span>server.xml</span></div>
    <div class="abs fr" style="top:116.20px"><span>tomcat-users.xml</span></div>
    <div class="abs fr" style="top:134.87px"><svg style="left:20px;top:4.500px;width:9px;height:9.500px" viewBox="0 0 9 9.500"><path d="M0.500 0.500h5.300L8.500 3.200v5.800H0.500z" fill="none" stroke="#e0e0e0" stroke-width="0.900"/><path d="M5.600 0.500v2.900h2.900M2 5h5M2 6.800h5" fill="none" stroke="#e0e0e0" stroke-width="0.800"/></svg><span>tomcat-users.xsd</span></div>
    <div class="abs fr" style="top:153.54px"><span>web.xml</span></div>
  </div>
  <!-- tab bar -->
  <div class="abs" style="left:176.500px;top:51px;width:847.500px;height:27.200px;background:#282828;border-bottom:1.500px solid #1e1e1e"></div>
  <div class="abs" style="left:176.500px;top:51px;width:91.500px;height:27.200px;background:#3c3c3c;border-bottom:2px solid #20a53a"></div>
  <div class="abs" style="left:193.500px;top:57px;height:15px;line-height:15px;font-size:10.300px;color:#f4f4f4;white-space:nowrap">server.xml</div>
  <svg style="left:248.700px;top:60.500px;width:8px;height:8px" viewBox="0 0 8 8"><path d="M0.800 0.800l6.400 6.400M7.200 0.800L0.800 7.200" stroke="#f4f4f4" stroke-width="2.300"/></svg>
  <!-- editor -->
  <div id="ed" class="abs">
    <div id="gutter" class="abs">
<div class="gl act">1<i></i></div>
<div class="gl">2</div>
<div class="gl">3</div>
<div class="gl">4</div>
<div class="gl">5</div>
<div class="gl">6</div>
<div class="gl">7<i></i></div>
<div class="gl">8</div>
<div class="gl"></div>
<div class="gl">9</div>
<div class="gl">10<i></i></div>
<div class="gl">11</div>
<div class="gl">12</div>
<div class="gl">13<i></i></div>
<div class="gl">14<i></i></div>
<div class="gl">15</div>
<div class="gl">16<i></i></div>
<div class="gl">17</div>
<div class="gl"></div>
<div class="gl">18</div>
<div class="gl">19<i></i></div>
<div class="gl">20</div>
<div class="gl">21</div>
<div class="gl">22</div>
<div class="gl">23</div>
<div class="gl">24</div>
    </div>
    <div id="code" class="abs">
<div class="cl act"><span class="p">&lt;</span><span class="t">Server</span> <span class="a">port</span><span class="e">=</span><span class="s">"8005"</span> <span class="a">shutdown</span><span class="e">=</span><span class="s">"SHUTDOWN"</span><span class="p">&gt;</span></div>
<div class="cl">    <span class="p">&lt;</span><span class="t">Listener</span> <span class="a">className</span><span class="e">=</span><span class="s">"org.apache.catalina.startup.VersionLoggerListener"</span> <span class="p">/&gt;</span></div>
<div class="cl">    <span class="p">&lt;</span><span class="t">Listener</span> <span class="a">SSLEngine</span><span class="e">=</span><span class="s">"on"</span> <span class="a">className</span><span class="e">=</span><span class="s">"org.apache.catalina.core.AprLifecycleListener"</span> <span class="p">/&gt;</span></div>
<div class="cl">    <span class="p">&lt;</span><span class="t">Listener</span> <span class="a">className</span><span class="e">=</span><span class="s">"org.apache.catalina.core.JreMemoryLeakPreventionListener"</span> <span class="p">/&gt;</span></div>
<div class="cl">    <span class="p">&lt;</span><span class="t">Listener</span> <span class="a">className</span><span class="e">=</span><span class="s">"org.apache.catalina.mbeans.GlobalResourcesLifecycleListener"</span> <span class="p">/&gt;</span></div>
<div class="cl">    <span class="p">&lt;</span><span class="t">Listener</span> <span class="a">className</span><span class="e">=</span><span class="s">"org.apache.catalina.core.ThreadLocalLeakPreventionListener"</span> <span class="p">/&gt;</span></div>
<div class="cl">    <span class="p">&lt;</span><span class="t">GlobalNamingResources</span><span class="p">&gt;</span></div>
<div class="cl"><span class="ig">    </span>    <span class="p">&lt;</span><span class="t">Resource</span> <span class="a">auth</span><span class="e">=</span><span class="s">"Container"</span> <span class="a">description</span><span class="e">=</span><span class="s">"User database that can be updated and saved"</span> <span class="a">factory</span><span class="e">=</span><span class="s">"org.apache.catalina.users</span></div>
<div class="cl">            <span class="s">.MemoryUserDatabaseFactory"</span> <span class="a">name</span><span class="e">=</span><span class="s">"UserDatabase"</span> <span class="a">pathname</span><span class="e">=</span><span class="s">"conf/tomcat-users.xml"</span> <span class="a">type</span><span class="e">=</span><span class="s">"org.apache.catalina.UserDatabase"</span> <span class="p">/&gt;</span></div>
<div class="cl">    <span class="p">&lt;/</span><span class="t">GlobalNamingResources</span><span class="p">&gt;</span></div>
<div class="cl">    <span class="p">&lt;</span><span class="t">Service</span> <span class="a">name</span><span class="e">=</span><span class="s">"Catalina"</span><span class="p">&gt;</span></div>
<div class="cl"><span class="ig">    </span>    <span class="p">&lt;</span><span class="t">Connector</span> <span class="a">connectionTimeout</span><span class="e">=</span><span class="s">"20000"</span> <span class="a">port</span><span class="e">=</span><span class="s">"8080"</span> <span class="a">protocol</span><span class="e">=</span><span class="s">"HTTP/1.1"</span> <span class="a">redirectPort</span><span class="e">=</span><span class="s">"8443"</span> <span class="a">URIEncoding</span><span class="e">=</span><span class="s">"UTF-8"</span><span class="p">/&gt;</span></div>
<div class="cl"><span class="ig">    </span>    <span class="p">&lt;</span><span class="t">Connector</span> <span class="a">port</span><span class="e">=</span><span class="s">"8009"</span> <span class="a">protocol</span><span class="e">=</span><span class="s">"AJP/1.3"</span> <span class="a">redirectPort</span><span class="e">=</span><span class="s">"8443"</span> <span class="p">/&gt;</span></div>
<div class="cl"><span class="ig">    </span>    <span class="p">&lt;</span><span class="t">Engine</span> <span class="a">defaultHost</span><span class="e">=</span><span class="s">"localhost"</span> <span class="a">name</span><span class="e">=</span><span class="s">"Catalina"</span><span class="p">&gt;</span></div>
<div class="cl"><span class="ig">    </span><span class="ig">    </span>    <span class="p">&lt;</span><span class="t">Realm</span> <span class="a">className</span><span class="e">=</span><span class="s">"org.apache.catalina.realm.LockOutRealm"</span><span class="p">&gt;</span>javascript:;</div>
<div class="cl"><span class="ig">    </span><span class="ig">    </span><span class="ig">    </span>    <span class="p">&lt;</span><span class="t">Realm</span> <span class="a">className</span><span class="e">=</span><span class="s">"org.apache.catalina.realm.UserDatabaseRealm"</span> <span class="a">resourceName</span><span class="e">=</span><span class="s">"UserDatabase"</span> <span class="p">/&gt;</span><span class="p">&lt;/</span><span class="t">Realm</span><span class="p">&gt;</span></div>
<div class="cl"><span class="ig">    </span><span class="ig">    </span>    <span class="p">&lt;</span><span class="t">Host</span> <span class="a">appBase</span><span class="e">=</span><span class="s">"webapps"</span> <span class="a">autoDeploy</span><span class="e">=</span><span class="s">"true"</span> <span class="a">name</span><span class="e">=</span><span class="s">"localhost"</span> <span class="a">unpackWARs</span><span class="e">=</span><span class="s">"true"</span><span class="p">&gt;</span></div>
<div class="cl"><span class="ig">    </span><span class="ig">    </span><span class="ig">    </span>    <span class="p">&lt;</span><span class="t">Valve</span> <span class="a">className</span><span class="e">=</span><span class="s">"org.apache.catalina.valves.AccessLogValve"</span> <span class="a">directory</span><span class="e">=</span><span class="s">"logs"</span> <span class="a">pattern</span><span class="e">=</span><span class="s">"%h %l %u %t </span><span class="n">&amp;quot;</span><span class="s">%r</span><span class="n">&amp;quot;</span><span class="s"> %s %b"</span> <span class="a">prefix</span></div>
<div class="cl">                    <span class="e">=</span><span class="s">"localhost_access_log"</span> <span class="a">suffix</span><span class="e">=</span><span class="s">".txt"</span> <span class="p">/&gt;</span></div>
<div class="cl"><span class="ig">    </span><span class="ig">    </span>    <span class="p">&lt;/</span><span class="t">Host</span><span class="p">&gt;</span></div>
<div class="cl"><span class="ig">    </span><span class="ig">    </span>    <span class="p">&lt;</span><span class="t">Host</span> <span class="a">appBase</span><span class="e">=</span><span class="s">""</span> <span class="a">autoDeploy</span><span class="e">=</span><span class="s">"true"</span> <span class="a">name</span><span class="e">=</span><span class="s">"39.106.155.202"</span> <span class="a">unpackWARs</span><span class="e">=</span><span class="s">"true"</span> <span class="a">xmlNamespaceAware</span><span class="e">=</span><span class="s">"false"</span> <span class="a">xmlValidation</span><span class="e">=</span><span class="s">"false"</span><span class="p">&gt;</span></div>
<div class="cl"><span class="ig">    </span><span class="ig">    </span><span class="ig">    </span>    <span class="p">&lt;</span><span class="t">Context</span> <span class="a">crossContext</span><span class="e">=</span><span class="s">"true"</span> <span class="a">docBase</span><span class="e">=</span><span class="s">"/www/server/tomcat/webapps/and"</span> <span class="a">path</span><span class="e">=</span><span class="s">""</span> <span class="a">reloadable</span><span class="e">=</span><span class="s">"true"</span> <span class="p">/&gt;</span></div>
<div class="cl"><span class="ig">    </span><span class="ig">    </span>    <span class="p">&lt;/</span><span class="t">Host</span><span class="p">&gt;</span></div>
<div class="cl"><span class="ig">    </span>    <span class="p">&lt;/</span><span class="t">Engine</span><span class="p">&gt;</span></div>
<div class="cl">    <span class="p">&lt;/</span><span class="t">Service</span><span class="p">&gt;</span></div>
<div class="cl"><span class="p">&lt;/</span><span class="t">Server</span><span class="p">&gt;</span></div>
    </div>
    <div class="abs" style="left:46.200px;top:283.700px;width:32.800px;height:11.300px;border:1px solid #43443c"></div>
    <div class="abs" style="left:35.600px;top:0;width:1.300px;height:11px;background:#f8f8f0"></div>
  </div>
  <!-- collapse handle -->
  <div class="abs" style="left:176px;top:233px;width:9px;height:32.500px;background:#222;border-radius:0 9px 9px 0;box-shadow:0 0 2px rgba(0,0,0,.6)"></div>
  <svg style="left:177.500px;top:245px;width:5px;height:8px" viewBox="0 0 5 8"><path d="M4.200 0.700L1 4l3.200 3.300" fill="none" stroke="#fff" stroke-width="1.200"/></svg>
  <!-- status bar -->
  <div id="stat" class="abs">
    <div class="abs stt" style="left:9.500px">文件位置：<span style="letter-spacing:0.520px">/www/server/tomcat/conf/server.xml</span></div>
    <div class="abs stt" style="left:512.700px">行 1 ,列 0</div>
    <div class="abs std" style="left:565.800px"></div>
    <div class="abs stt" style="left:575.800px">历史版本：10份</div>
    <div class="abs std" style="left:648.600px"></div>
    <div class="abs stt" style="left:659.300px">空格：4</div>
    <div class="abs std" style="left:700.200px"></div>
    <div class="abs stt" style="left:710.200px">编码：UTF-8</div>
    <div class="abs std" style="left:771.800px"></div>
    <div class="abs stt" style="left:782.100px">语言：XML</div>
    <div class="abs std" style="left:837.400px"></div>
  </div>
  <div class="abs" style="left:176.500px;top:480.700px;width:847.500px;height:26px;background:#7a7a7a"></div>
  <!-- annotations -->
  <svg style="left:0;top:0;width:1024px;height:499px" viewBox="128 138 1024 499">
    <g fill="#f422f4" stroke="none">
      <path d="M593.600 450.200L519.300 506.300 516.500 503.300 510.800 516.400 524.600 512.700 521.600 509.200z"/>
      <rect x="624.500" y="472.300" width="162" height="1.700"/>
      <path d="M871.200 520.700L797.300 477.600 795.300 481.600 787.200 470.800 800.600 470.400 798.700 474.500z"/>
    </g>
    <text x="473.500" y="551.800" font-family="Liberation Sans, Noto Sans CJK SC, sans-serif" font-size="19.300" letter-spacing="0.400" fill="#f422f4">name为网站域名 或者为ip地址</text>
    <text x="792.500" y="549.300" font-family="Liberation Sans, Noto Sans CJK SC, sans-serif" font-size="19.300" fill="#f422f4">你的项目名称 建议为小写</text>
  </svg>
</div>
</body>
</html>
